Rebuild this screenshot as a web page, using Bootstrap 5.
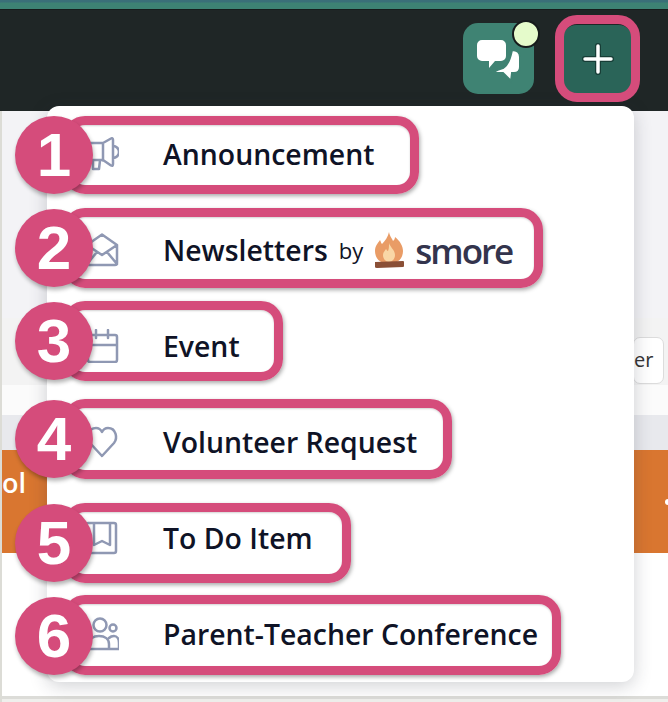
<!DOCTYPE html>
<html lang="en">

<head>
    <meta charset="UTF-8">
    <meta name="viewport" content="width=device-width, initial-scale=1.0">
    <title>Create menu</title>

    <link href="https://cdn.jsdelivr.net/npm/bootstrap@5.3.0/dist/css/bootstrap.min.css" rel="stylesheet">

    <style>
        html, body {
            height: 702px;
            overflow: hidden;
        }

        body {
            background: #efefec;
            font-family: "Open Sans", "Noto Sans", sans-serif;
        }

        /* page behind the menu */
        .shot-frame {
            position: relative;
            height: 702px;
            border-left: 2px solid #dcdcd6;
        }

        .teal-strip {
            height: 9px;
            background: linear-gradient(#3a6f78 0, #3a6f78 2px, #3d8273 3px);
            margin-left: -2px;
        }

        .top-bar {
            height: 102px;
            margin-left: -2px;
            padding: 6px 28px 9px 0;
            background: #1f2626;
            border-top: 1px solid #161b1b;
            gap: 29px;
        }

        .chat-btn {
            position: relative;
            width: 71px;
            height: 71px;
            margin-top: 7px;
            background: #3f8373;
            border-radius: 15px;
        }

        .chat-dot {
            position: absolute;
            top: -3px;
            right: -6px;
            width: 28px;
            height: 28px;
            background: #e5fbcb;
            border: 2px solid #161b1b;
            border-radius: 50%;
        }

        .plus-btn {
            width: 69px;
            height: 68px;
            margin-top: 9px;
            margin-right: 8px;
            background: #2a6458;
            border-radius: 13px;
        }

        .hero-area {
            height: 207px;
            background: #f3f3f6;
        }

        .filter-band {
            height: 67px;
            padding: 19px 4px 0 0;
            background: #f3f3f3;
        }

        .filter-btn {
            width: 31px;
            height: 47px;
            padding-top: 8px;
            font-size: 20px;
            line-height: 28px;
            text-align: right;
            padding-right: 15px;
            color: #333;
            background: #fff;
            border: 1px solid #dcdcdc;
            border-radius: 7px;
        }

        .gap-white {
            height: 30px;
            background: #fbfbfb;
        }

        .gray-band {
            height: 35px;
            background: #e8e9ed;
        }

        .orange-band {
            height: 103px;
            padding: 15px 0 0 0;
            background: #d97630;
            color: #fff;
            font-size: 27px;
            font-weight: 600;
            line-height: 36px;
        }

        .orange-dot {
            width: 6px;
            height: 6px;
            margin-top: 34px;
            margin-right: -3px;
            background: #fff;
            border-radius: 50%;
        }

        .page-rest {
            height: 143px;
            background: #fff;
        }

        .page-end {
            height: 3px;
            background: #dcdcd8;
        }

        /* the dropdown */
        .create-menu {
            position: absolute;
            left: 45px;
            top: 106px;
            width: 587px;
            height: 576px;
            padding: 0;
            border: 0;
            border-radius: 12px;
            background: #fff;
            box-shadow: 0 4px 18px rgba(40, 44, 60, .22);
        }

        .create-item {
            height: 96px;
            padding: 0 0 0 38px;
            gap: 44px;
            color: #0f1326;
            font-size: 28.4px;
            font-weight: 600;
            line-height: 1;
        }

        .menu-icon {
            flex: 0 0 34px;
            width: 34px;
            height: 34px;
            fill: none;
            stroke: #8f98b3;
            stroke-width: 2.5;
            stroke-linecap: round;
            stroke-linejoin: round;
        }

        .by-text {
            margin-left: 11px;
            font-size: 22px;
            font-weight: 400;
        }

        .flame-logo {
            width: 30px;
            height: 37px;
            margin-left: 11px;
        }

        .smore-word {
            margin-left: 11px;
            font-size: 35px;
            font-weight: 600;
            letter-spacing: -2px;
            color: #33344d;
        }

        /* pink annotations on top of the screenshot */
        .hl-box {
            position: absolute;
            z-index: 1010;
            border: 9px solid #d54c7b;
            border-radius: 22px;
            box-shadow: 1px 2px 4px rgba(0, 0, 0, .35), inset 0 1px 2px rgba(0, 0, 0, .18);
            pointer-events: none;
        }

        .hl-plus {
            left: 553px;
            top: 15px;
            width: 85px;
            height: 87px;
            box-shadow: none;
        }

        .hl-1 { left: 61px; top: 116px; width: 356px; height: 78px; }
        .hl-2 { left: 61px; top: 208px; width: 480px; height: 80px; }
        .hl-3 { left: 61px; top: 301px; width: 220px; height: 80px; }
        .hl-4 { left: 61px; top: 399px; width: 389px; height: 80px; }
        .hl-5 { left: 61px; top: 503px; width: 288px; height: 80px; }
        .hl-6 { left: 61px; top: 595px; width: 498px; height: 80px; }

        .num-dot {
            position: absolute;
            z-index: 1020;
            left: 13px;
            width: 78px;
            height: 78px;
            font-family: "Liberation Sans", Arial, sans-serif;
            font-size: 62px;
            font-weight: 700;
            line-height: 78px;
            text-align: center;
            color: #fff;
            background: #d54c7b;
            border-radius: 50%;
            box-shadow: 1px 3px 4px rgba(0, 0, 0, .3);
        }

        .num-1 { top: 116px; }
        .num-2 { top: 209px; }
        .num-3 { top: 302px; }
        .num-4 { top: 400px; }
        .num-5 { top: 504px; }
        .num-6 { top: 597px; }
    </style>
</head>

<body>
    <div class="shot-frame">
        <div class="teal-strip"></div>

        <div class="top-bar d-flex justify-content-end align-items-start">
            <div class="chat-btn">
                <svg width="71" height="71" viewBox="0 0 71 71">
                    <path fill="#fff" d="M19 17h19a5 5 0 0 1 5 5v11a5 5 0 0 1-5 5h-6l-6 7v-7h-7a5 5 0 0 1-5-5V22a5 5 0 0 1 5-5z" />
                    <path fill="#fff" stroke="#3f8373" stroke-width="2" d="M49 27q8 0 8 7v10q0 6-6 6h-2l-1 8-8-8H29q6-4 11-5 6-3 9-18z" />
                </svg>
                <span class="chat-dot"></span>
            </div>
            <div class="plus-btn d-flex align-items-center justify-content-center">
                <svg width="32" height="32" viewBox="0 0 32 32">
                    <path stroke="#173d36" stroke-width="6" stroke-linecap="round" d="M16 3v26M3 16h26" />
                    <path stroke="#fff" stroke-width="3.500" stroke-linecap="round" d="M16 3v26M3 16h26" />
                </svg>
            </div>
        </div>

        <div class="hero-area"></div>
        <div class="filter-band d-flex justify-content-end">
            <div class="filter-btn">er</div>
        </div>
        <div class="gap-white"></div>
        <div class="gray-band"></div>
        <div class="orange-band d-flex justify-content-between align-items-start">
            <span>ol</span>
            <span class="orange-dot"></span>
        </div>
        <div class="page-rest"></div>
        <div class="page-end"></div>

        <ul class="dropdown-menu show create-menu">
            <li>
                <a class="dropdown-item create-item d-flex align-items-center" href="#">
                    <svg class="menu-icon" viewBox="0 0 34 34">
                        <path d="M18 6l8-4.500q2-1 2 1.500v24q0 2.500-2 1.500l-8-5.500H5V6zM18 6v17.500M8 23.500V32h6l1-8.500M28 9a6 6 0 0 1 0 12" />
                    </svg>
                    <span>Announcement</span>
                </a>
            </li>
            <li>
                <a class="dropdown-item create-item d-flex align-items-center" href="#">
                    <svg class="menu-icon" viewBox="0 0 34 34">
                        <path d="M2 12L17 1.500 32 12v18q0 2-2 2H4q-2 0-2-2zM2 12l15 10 15-10M2 31l10-12M32 31L22 19" />
                    </svg>
                    <span class="d-flex align-items-center">
                        <span>Newsletters</span>
                        <span class="by-text">by</span>
                        <svg class="flame-logo" viewBox="0 0 30 37">
                            <path fill="#e99c66" d="M15 0c1 5 3 6 4 9 1-1 2-2 2-4 5 4 8 9 8 14 0 8-6 13-14 13S1 27 1 19c0-5 3-8 5-11 1 2 1 3 2 4 3-3 6-7 7-12z" />
                            <path fill="#f9d7a6" d="M15 11c1 4 6 7 6 12 0 4-3 7-6 7s-6-3-6-7c0-3 2-4 3-6 1 1 1 2 2 2 1-2 1-5 1-8z" />
                            <path fill="#8a4f36" d="M1 30l28-1q1 0 1 1v4q0 1-1 1l-26 1q-2 0-2-1z" />
                        </svg>
                        <span class="smore-word">smore</span>
                    </span>
                </a>
            </li>
            <li>
                <a class="dropdown-item create-item d-flex align-items-center" href="#">
                    <svg class="menu-icon" viewBox="0 0 34 34">
                        <path d="M5 6h25q2 0 2 2v23q0 2-2 2H5q-2 0-2-2V8q0-2 2-2zM3 16h29M11 1v8M23 1v8" />
                    </svg>
                    <span>Event</span>
                </a>
            </li>
            <li>
                <a class="dropdown-item create-item d-flex align-items-center" href="#">
                    <svg class="menu-icon" viewBox="0 0 34 34">
                        <path d="M17 31L5 18C1 13 3 3 11 3c3 0 5 2 6 4 1-2 3-4 6-4 8 0 10 10 6 15z" />
                    </svg>
                    <span>Volunteer Request</span>
                </a>
            </li>
            <li>
                <a class="dropdown-item create-item d-flex align-items-center" href="#">
                    <svg class="menu-icon" viewBox="0 0 34 34">
                        <path d="M3 2h26q2 0 2 2v26q0 2-2 2H3q-2 0-2-2V4q0-2 2-2zM9 2v22l8-4 8 4V2" />
                    </svg>
                    <span>To Do Item</span>
                </a>
            </li>
            <li>
                <a class="dropdown-item create-item d-flex align-items-center" href="#">
                    <svg class="menu-icon" viewBox="0 0 34 34">
                        <circle cx="15" cy="8" r="6.500" />
                        <circle cx="28" cy="11" r="3.500" />
                        <path d="M4 32v-5c0-5 4-8 10-8s10 3 10 8v5zM24 21c1-1 3-2 5-2 3 0 5 3 5 7v6H24" />
                    </svg>
                    <span>Parent-Teacher Conference</span>
                </a>
            </li>
        </ul>

        <div class="hl-box hl-plus"></div>
        <div class="hl-box hl-1"></div>
        <div class="hl-box hl-2"></div>
        <div class="hl-box hl-3"></div>
        <div class="hl-box hl-4"></div>
        <div class="hl-box hl-5"></div>
        <div class="hl-box hl-6"></div>

        <div class="num-dot num-1">1</div>
        <div class="num-dot num-2">2</div>
        <div class="num-dot num-3">3</div>
        <div class="num-dot num-4">4</div>
        <div class="num-dot num-5">5</div>
        <div class="num-dot num-6">6</div>
    </div>

    <script src="https://cdn.jsdelivr.net/npm/bootstrap@5.3.0/dist/js/bootstrap.bundle.min.js"></script>
</body>

</html>
